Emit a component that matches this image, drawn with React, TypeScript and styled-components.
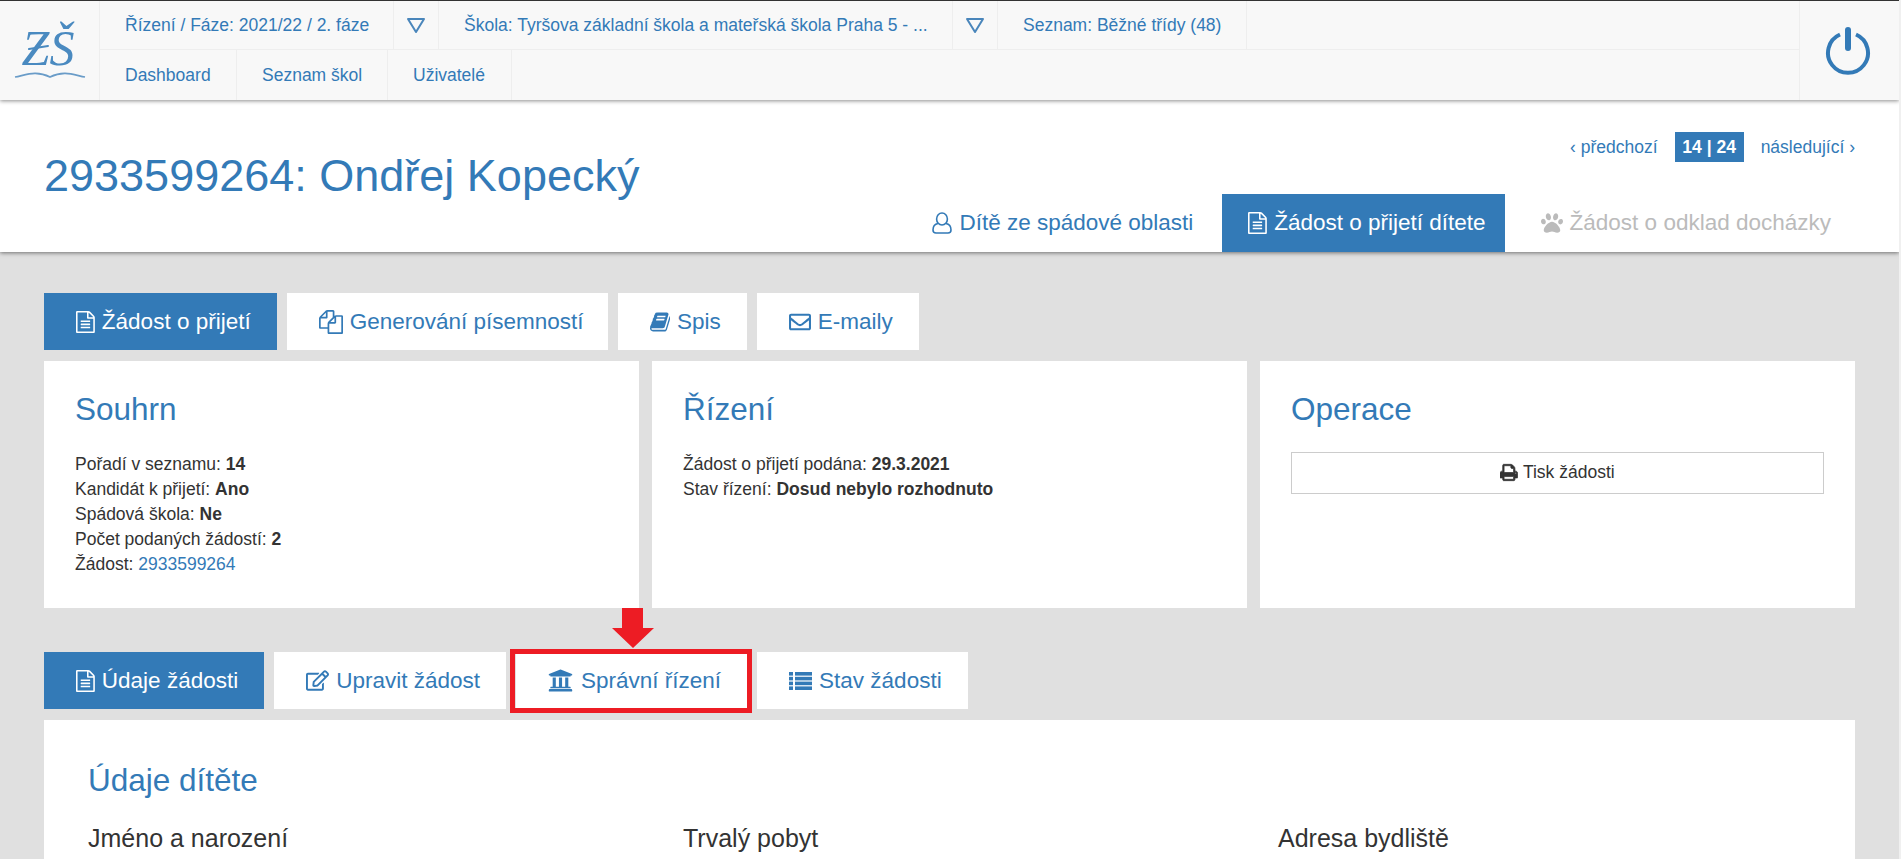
import React from "react";
import styled, { createGlobalStyle } from "styled-components";
import { FaPaw, FaRegEnvelope, FaRegEdit, FaUniversity } from "react-icons/fa";

const Global = createGlobalStyle`
  html, body { margin: 0; padding: 0; height: 859px; overflow: hidden; background: #f0f0f0; }
  body { font-family: "Liberation Sans", Arial, sans-serif; color: #333; font-size: 17.5px; }
  * { box-sizing: border-box; }
  a { color: #337ab7; text-decoration: none; }
`;

const Page = styled.div`
  width: 1899px;
  height: 859px;
  background: #e0e0e0;
  overflow: hidden;
`;
const Header = styled.header`
  position: relative;
  z-index: 2;
  display: flex;
  height: 100px;
  background: #f8f8f8;
  border-top: 1px solid #333;
  box-shadow: 0 1px 4px rgba(0, 0, 0, 0.45);
`;
const LogoBox = styled.div`
  width: 100px;
  flex: none;
  display: flex;
  border-right: 1px solid #eee;
`;
const Nav = styled.nav`
  flex: 1;
  display: flex;
  flex-direction: column;
`;
const NavRow = styled.div<{ $first?: boolean }>`
  display: flex;
  height: ${(p) => (p.$first ? "49px" : "50px")};
  border-bottom: ${(p) => (p.$first ? "1px solid #eee" : "0")};
`;
const NavCell = styled.a<{ $w?: number }>`
  display: flex;
  align-items: center;
  padding: 0 25px;
  font-size: 17.5px;
  white-space: nowrap;
  border-right: 1px solid #eee;
  width: ${(p) => (p.$w ? `${p.$w}px` : "auto")};
`;
const Caret = styled.a`
  display: flex;
  align-items: center;
  justify-content: center;
  width: 45px;
  border-right: 1px solid #eee;
`;
const PowerBox = styled.div`
  width: 100px;
  flex: none;
  display: flex;
  align-items: center;
  justify-content: center;
  padding-right: 3px;
  border-left: 1px solid #eee;
`;
const Band = styled.section`
  position: relative;
  z-index: 1;
  display: flex;
  justify-content: space-between;
  height: 152px;
  padding: 0 44px;
  background: #fff;
  box-shadow: 0 1px 4px rgba(0, 0, 0, 0.5);
`;
const Title = styled.h1`
  margin: 51px 0 0;
  font-size: 45px;
  font-weight: 400;
  line-height: 50px;
  color: #337ab7;
`;
const BandRight = styled.div`
  display: flex;
  flex-direction: column;
  align-items: flex-end;
`;
const Pager = styled.div`
  display: flex;
  align-items: center;
  gap: 17px;
  height: 30px;
  margin-top: 32px;
  font-size: 17.5px;
`;
const PagerCount = styled.span`
  display: flex;
  align-items: center;
  justify-content: center;
  width: 69px;
  height: 30px;
  background: #337ab7;
  color: #fff;
  font-weight: 700;
`;
const TopTabs = styled.div`
  display: flex;
  margin-top: 32px;
  height: 58px;
`;
const TopTab = styled.a<{ $active?: boolean; $disabled?: boolean; $pad: string }>`
  display: flex;
  align-items: center;
  gap: 7px;
  padding: ${(p) => p.$pad};
  font-size: 22.5px;
  white-space: nowrap;
  background: ${(p) => (p.$active ? "#337ab7" : "transparent")};
  color: ${(p) => (p.$active ? "#fff" : p.$disabled ? "#bbb" : "#337ab7")};
`;
const Main = styled.main`
  padding: 41px 44px 0;
`;
const Tabs = styled.div<{ $top?: number }>`
  display: flex;
  gap: 10px;
  height: 57px;
  margin-top: ${(p) => p.$top ?? 0}px;
  margin-bottom: 11px;
`;
const Tab = styled.a<{ $active?: boolean; $gap?: number; $right?: number }>`
  position: relative;
  display: flex;
  align-items: center;
  gap: ${(p) => p.$gap ?? 7}px;
  padding: 0 ${(p) => p.$right ?? 26}px 0 32px;
  font-size: 22.5px;
  white-space: nowrap;
  background: ${(p) => (p.$active ? "#337ab7" : "#fff")};
  color: ${(p) => (p.$active ? "#fff" : "#337ab7")};
`;
const Highlight = styled.span`
  position: absolute;
  top: -3px;
  bottom: -4px;
  left: -6px;
  right: -5px;
  border: 5px solid #ed1c24;
  pointer-events: none;
`;
const Arrow = styled.svg`
  position: absolute;
  top: -44px;
  left: 96px;
  width: 42px;
  height: 40px;
`;
const Cards = styled.div`
  display: grid;
  grid-template-columns: repeat(3, 595px);
  gap: 13px;
  height: 247px;
`;
const Card = styled.article`
  background: #fff;
  padding: 30px 31px 0;
`;
const CardTitle = styled.h2`
  margin: 0 0 25px;
  font-size: 31.5px;
  font-weight: 400;
  line-height: 36px;
  color: #337ab7;
`;
const Info = styled.div`
  font-size: 17.5px;
  line-height: 25px;
  color: #333;
`;
const Wide = styled.button`
  display: flex;
  align-items: center;
  justify-content: center;
  gap: 5px;
  width: 100%;
  height: 42px;
  padding: 0 0 2px;
  background: #fff;
  border: 1px solid #ccc;
  font: inherit;
  color: #333;
`;
const Panel = styled.section`
  background: #fff;
  height: 160px;
  padding: 42px 44px 0;
`;
const Columns = styled.div`
  display: grid;
  grid-template-columns: 595px 595px 1fr;
  margin-top: 19px;
`;
const SubHead = styled.h3`
  margin: 0;
  font-size: 25px;
  font-weight: 400;
  line-height: 30px;
  color: #333;
`;
const Glyph = styled.svg<{ $h?: number }>`
  height: ${(p) => p.$h ?? 22}px;
  width: auto;
  flex: none;
  fill: currentColor;
`;

const FileIcon = () => (
  <Glyph viewBox="0 0 1536 1792">
    <path d="M1468 380q28 28 48 76t20 88v1152q0 40-28 68t-68 28h-1344q-40 0-68-28t-28-68v-1600q0-40 28-68t68-28h896q40 0 88 20t76 48zm-444-244v376h376q-10-29-22-41l-313-313q-12-12-41-22zm384 1528v-1024h-416q-40 0-68-28t-28-68v-416h-768v1536h1280zm-1024-864q0-14 9-23t23-9h704q14 0 23 9t9 23v64q0 14-9 23t-23 9h-704q-14 0-23-9t-9-23v-64zm736 224q14 0 23 9t9 23v64q0 14-9 23t-23 9h-704q-14 0-23-9t-9-23v-64q0-14 9-23t23-9h704zm0 256q14 0 23 9t9 23v64q0 14-9 23t-23 9h-704q-14 0-23-9t-9-23v-64q0-14 9-23t23-9h704z" />
  </Glyph>
);
const FilesIcon = () => (
  <Glyph $h={24} viewBox="0 0 1792 1792">
    <path d="M1696 384q40 0 68 28t28 68v1216q0 40-28 68t-68 28h-960q-40 0-68-28t-28-68v-288h-544q-40 0-68-28t-28-68v-672q0-40 20-88t48-76l408-408q28-28 76-48t88-20h416q40 0 68 28t28 68v328q68-40 128-40h416zm-544 213l-299 299h299v-299zm-640-384l-299 299h299v-299zm196 647l316-316v-416h-384v416q0 40-28 68t-68 28h-416v640h512v-256q0-40 20-88t48-76zm956 804v-1152h-384v416q0 40-28 68t-68 28h-416v640h896z" />
  </Glyph>
);
const BookIcon = () => (
  <Glyph viewBox="0 0 1664 1792">
    <path d="M1639 478q40 57 18 129l-275 906q-19 64-76.5 107.5t-122.5 43.5h-923q-77 0-148.5-53.5t-99.5-131.5q-24-67-2-127 0-4 3-27t4-37q1-8-3-21.5t-3-19.5q2-11 8-21t16.5-23.5 16.5-23.5q23-38 45-91.5t30-91.5q3-10 .5-30t-.5-28q3-11 17-28t17-23q21-36 42-92t25-90q1-9-2.5-32t.5-28q4-13 22-30.5t22-22.5q19-26 42.5-84.5t27.5-96.5q1-8-3-25.5t-2-26.5q2-8 9-18t18-23 17-21q8-12 16.5-30.5t15-35 16-36 19.5-32 26.5-23.5 36-11.5 47.5 5.5l-1 3q38-9 51-9h761q74 0 114 56t18 130l-274 906q-36 119-71.5 153.5t-128.5 34.5h-869q-27 0-38 15-11 16-1 43 24 70 144 70h923q29 0 56-15.5t35-41.5l300-987q7-22 5-57 38 15 59 43zm-1064 2q-4 13 2 22.5t20 9.5h608q13 0 25.5-9.5t16.5-22.5l21-64q4-13-2-22.5t-20-9.5h-608q-13 0-25.5 9.5t-16.5 22.5zm-83 256q-4 13 2 22.5t20 9.5h608q13 0 25.5-9.5t16.5-22.5l21-64q4-13-2-22.5t-20-9.5h-608q-13 0-25.5 9.5t-16.5 22.5z" />
  </Glyph>
);
const PrintIcon = () => (
  <Glyph $h={19} viewBox="0 0 1664 1792">
    <path stroke="currentColor" strokeWidth="70" d="M384 1536h896v-256h-896v256zm0-640h896v-384h-160q-40 0-68-28t-28-68v-160h-640v640zm1152 64q0-26-19-45t-45-19-45 19-19 45 19 45 45 19 45-19 19-45zm128 0v416q0 13-9.5 22.5t-22.5 9.5h-224v160q0 40-28 68t-68 28h-960q-40 0-68-28t-28-68v-160h-224q-13 0-22.5-9.5t-9.5-22.5v-416q0-79 56.5-135.5t135.5-56.5h64v-544q0-40 28-68t68-28h672q40 0 88 20t76 48l152 152q28 28 48 76t20 88v256h64q79 0 135.5 56.5t56.5 135.5z" />
  </Glyph>
);
const UserIcon = () => (
  <Glyph viewBox="0 0 20 22">
    <g fill="none" stroke="currentColor" strokeWidth="1.6">
      <ellipse cx="10" cy="7" rx="5.4" ry="6" />
      <path d="M6 11.5C3 12 1 14.2 1 18c0 2 1.4 3 3 3h12c1.600 0 3-1 3-3 0-3.800-2-6-5-6.500" />
    </g>
  </Glyph>
);
const ListIcon = () => (
  <Glyph $h={18} viewBox="0 0 23 18">
    <rect x="0" y="0" width="4" height="3.600" />
    <rect x="6" y="0" width="17" height="3.600" />
    <rect x="0" y="4.800" width="4" height="3.600" />
    <rect x="6" y="4.800" width="17" height="3.600" />
    <rect x="0" y="9.600" width="4" height="3.600" />
    <rect x="6" y="9.600" width="17" height="3.600" />
    <rect x="0" y="14.400" width="4" height="3.600" />
    <rect x="6" y="14.400" width="17" height="3.600" />
  </Glyph>
);
const Logo = () => (
  <svg width="99" height="99" viewBox="0 1 99 99">
    <text x="48" y="65" textAnchor="middle" fontFamily="'Liberation Serif', serif" fontStyle="italic" fontSize="50" fill="#4a8ac0">ZŠ</text>
    <path d="M29 49 L48 46" fill="none" stroke="#4a8ac0" strokeWidth="2" strokeLinecap="round" />
    <path d="M15 77 C26 75 36 70 50 77 C64 70 74 75 85 77" fill="none" stroke="#6a9cc8" strokeWidth="1.700" />
  </svg>
);
const Tri = () => (
  <svg width="20" height="17" viewBox="0 0 20 17">
    <path d="M2 2 H18 L10 15 Z" fill="none" stroke="#4a86bb" strokeWidth="2" strokeLinejoin="round" />
  </svg>
);
const Power = () => (
  <svg width="46" height="48" viewBox="0 0 46 48">
    <path d="M15 7.500 A20 20 0 1 0 31 7.500" fill="none" stroke="#337ab7" strokeWidth="4" />
    <path d="M23 3 V21" stroke="#337ab7" strokeWidth="6" strokeLinecap="round" />
  </svg>
);

export default function App() {
  return (
    <Page>
      <Global />
      <Header>
        <LogoBox><Logo /></LogoBox>
        <Nav>
          <NavRow $first>
            <NavCell $w={294}>Řízení / Fáze: 2021/22 / 2. fáze</NavCell>
            <Caret><Tri /></Caret>
            <NavCell $w={514}>Škola: Tyršova základní škola a mateřská škola Praha 5 - ...</NavCell>
            <Caret><Tri /></Caret>
            <NavCell>Seznam: Běžné třídy (48)</NavCell>
          </NavRow>
          <NavRow>
            <NavCell $w={137}>Dashboard</NavCell>
            <NavCell $w={151}>Seznam škol</NavCell>
            <NavCell $w={124}>Uživatelé</NavCell>
          </NavRow>
        </Nav>
        <PowerBox><Power /></PowerBox>
      </Header>
      <Band>
        <Title>2933599264: Ondřej Kopecký</Title>
        <BandRight>
          <Pager>
            <a>‹ předchozí</a>
            <PagerCount>14 | 24</PagerCount>
            <a>následující ›</a>
          </Pager>
          <TopTabs>
            <TopTab $pad="0 29px 0 24px"><UserIcon />Dítě ze spádové oblasti</TopTab>
            <TopTab $active $pad="0 19px 0 26px"><FileIcon />Žádost o přijetí dítete</TopTab>
            <TopTab $disabled $pad="0 24px 0 36px"><FaPaw size={22} />Žádost o odklad docházky</TopTab>
          </TopTabs>
        </BandRight>
      </Band>
      <Main>
        <Tabs>
          <Tab $active><FileIcon />Žádost o přijetí</Tab>
          <Tab $right={24}><FilesIcon />Generování písemností</Tab>
          <Tab><BookIcon />Spis</Tab>
          <Tab><FaRegEnvelope size={22} />E-maily</Tab>
        </Tabs>
        <Cards>
          <Card>
            <CardTitle>Souhrn</CardTitle>
            <Info>
              <div>Pořadí v seznamu: <b>14</b></div>
              <div>Kandidát k přijetí: <b>Ano</b></div>
              <div>Spádová škola: <b>Ne</b></div>
              <div>Počet podaných žádostí: <b>2</b></div>
              <div>Žádost: <a>2933599264</a></div>
            </Info>
          </Card>
          <Card>
            <CardTitle>Řízení</CardTitle>
            <Info>
              <div>Žádost o přijetí podána: <b>29.3.2021</b></div>
              <div>Stav řízení: <b>Dosud nebylo rozhodnuto</b></div>
            </Info>
          </Card>
          <Card>
            <CardTitle>Operace</CardTitle>
            <Wide><PrintIcon />Tisk žádosti</Wide>
          </Card>
        </Cards>
        <Tabs $top={44}>
          <Tab $active><FileIcon />Údaje žádosti</Tab>
          <Tab><FaRegEdit size={23} />Upravit žádost</Tab>
          <Tab $gap={8}>
            <FaUniversity size={25} />Správní řízení
            <Highlight />
            <Arrow viewBox="0 0 42 40"><path d="M10 0 H31 V20 H42 L21 40 L0 20 H10 Z" fill="#ed1c24" /></Arrow>
          </Tab>
          <Tab><ListIcon />Stav žádosti</Tab>
        </Tabs>
        <Panel>
          <CardTitle>Údaje dítěte</CardTitle>
          <Columns>
            <SubHead>Jméno a narození</SubHead>
            <SubHead>Trvalý pobyt</SubHead>
            <SubHead>Adresa bydliště</SubHead>
          </Columns>
        </Panel>
      </Main>
    </Page>
  );
}
